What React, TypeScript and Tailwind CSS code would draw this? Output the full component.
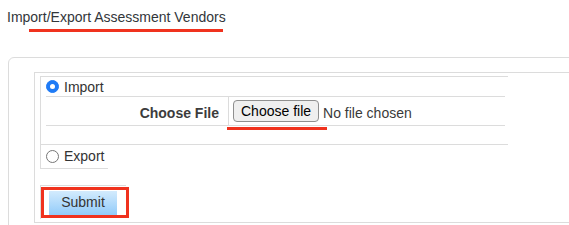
import React from 'react';

const Radio = ({ checked }: { checked?: boolean }) => (
  <span
    className={`w-[13px] h-[13px] rounded-full shrink-0 flex items-center justify-center ${
      checked ? 'bg-[#1f7bf6] border border-[#1f7bf6]' : 'bg-white border border-[#767676]'
    }`}
  >
    {checked && <span className="w-[5px] h-[5px] rounded-full bg-white" />}
  </span>
);

export default function App() {
  return (
    <div className="relative w-[569px] h-[225px] overflow-hidden bg-white text-[#333] font-['Liberation_Sans',Arial,sans-serif]">
      <div className="pl-[7px] pt-[8px] text-[14px] leading-[18px] text-[#32363a]">Import/Export Assessment Vendors</div>

      <div className="ml-[8px] mt-[31px] w-[620px] h-[200px] border border-[#dcdcdc] rounded-tl-[6px] pl-[25px] pt-[14px]">
        <div className="w-[600px] h-[151px] border border-[#dcdcdc] pl-[5px] pt-[3px]">
          <div className="w-[468px] border-t border-l border-b border-[#dcdcdc] pl-[5px] pr-[3px] h-[69px]">
            <div className="h-[20px] border-b border-[#dcdcdc] flex items-center gap-[5px] text-[14px]">
              <Radio checked />
              <span className="leading-none">Import</span>
            </div>
            <div className="flex h-[29px] border-b border-[#dcdcdc]">
              <div className="w-[182px] text-right pr-[9px] pt-[6px] text-[14px] font-bold text-[#3c3c3c]">Choose File</div>
              <div className="border-l border-[#dcdcdc] pl-[4px] pt-[3px] flex items-start gap-[4px]">
                <button className="h-[22px] px-[7px] bg-[#efefef] border border-[#8f8f8f] rounded-[4px] text-[14px] leading-none text-black">
                  Choose file
                </button>
                <span className="pt-[3px] text-[14px] text-[#3a3a3a]">No file chosen</span>
              </div>
            </div>
          </div>
          <div className="w-[68px] h-[24px] border-l border-b border-[#dcdcdc] pl-[5px] flex items-center gap-[5px] text-[14px]">
            <Radio />
            <span>Export</span>
          </div>
          <div className="mt-[16px] w-[86px] h-[34px] border-l border-t border-[#dcdcdc] pl-[8px] pt-[4px]">
            <button className="w-[68px] h-[24px] bg-gradient-to-b from-[#d3ebfd] to-[#91cbf9] text-[14px] text-[#333]">
              Submit
            </button>
          </div>
        </div>
      </div>

      <div className="absolute left-[29px] top-[29px] w-[194px] h-[3px] bg-[#f0321e]" />
      <div className="absolute left-[227px] top-[127px] w-[100px] h-[3px] bg-[#f0321e]" />
      <div className="absolute left-[41px] top-[187px] w-[88px] h-[31px] border-[3px] border-[#f0321e]" />
    </div>
  );
}
